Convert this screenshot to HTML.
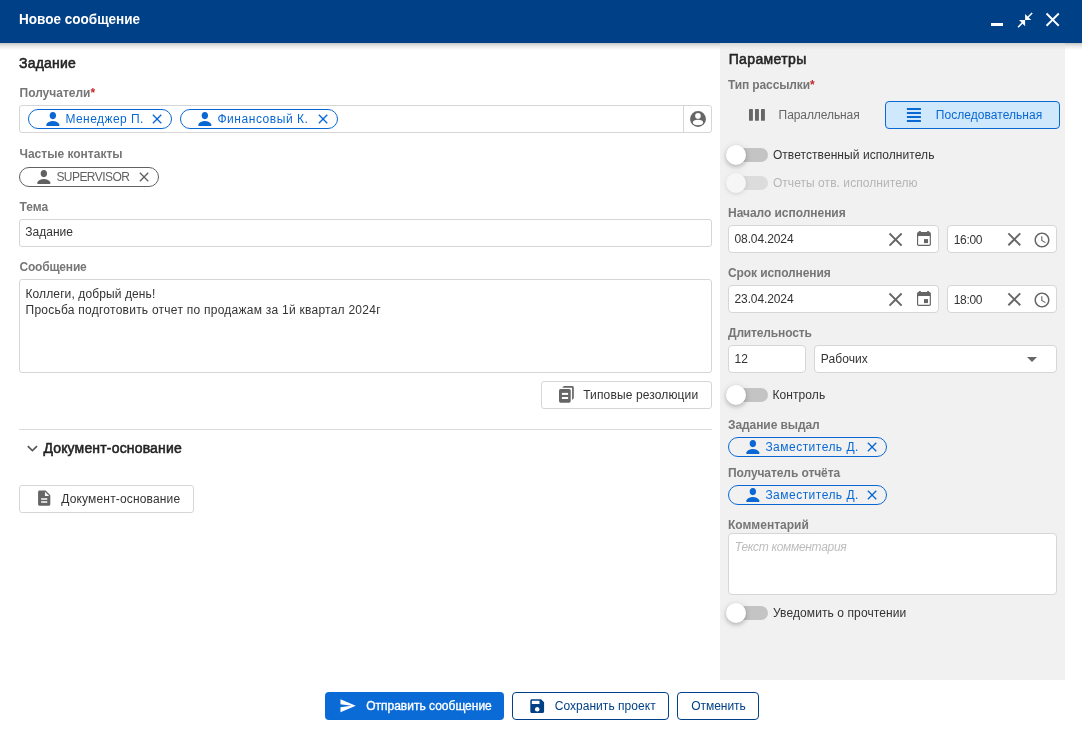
<!DOCTYPE html>
<html><head><meta charset="utf-8"><title>Новое сообщение</title>
<style>
html,body{margin:0;padding:0;}
body{width:1082px;height:731px;position:relative;overflow:hidden;background:#fff;font-family:"Liberation Sans", sans-serif;}
#w{position:absolute;left:0;top:0;width:1082px;height:731px;will-change:transform;background:#fff;}
.t{position:absolute;white-space:nowrap;}
.r{position:absolute;}
</style></head><body><div id="w">
<div class="r" style="left:0px;top:0px;width:1082px;height:43px;background:#004087;"></div>
<div class="r" style="left:0px;top:43px;width:1082px;height:7px;background:linear-gradient(rgba(0,0,0,0.12),rgba(0,0,0,0.05) 40%,rgba(0,0,0,0));"></div>
<div class="t" style="left:19px;top:10.40px;font-size:15px;line-height:18px;font-weight:bold;color:#fff;letter-spacing:0px;font-style:normal;transform:scaleX(0.902);transform-origin:0 0;">Новое сообщение</div>
<div class="r" style="left:991px;top:23.4px;width:12px;height:2.8px;background:#fff;"></div>
<svg class="r" style="left:1015.8px;top:11px" width="18.24" height="18.24" viewBox="0 0 24 24" fill="#fff"><path d="M22 3.41L16.71 8.7 20 12h-8V4l3.29 3.29L20.59 2 22 3.41zM3.41 22l5.29-5.29L12 20v-8H4l3.29 3.29L2 20.59 3.41 22z"/></svg>
<svg class="r" style="left:1041.45px;top:8.3px" width="23.3" height="23.3" viewBox="0 0 24 24" fill="#fff"><path d="M19 6.41L17.59 5 12 10.59 6.41 5 5 6.41 10.59 12 5 17.59 6.41 19 12 13.41 17.59 19 19 17.59 13.41 12z"/></svg>
<div class="r" style="left:720px;top:43px;width:345px;height:637px;background:#f1f1f1;"></div>
<div class="r" style="left:0px;top:43px;width:1082px;height:7px;background:linear-gradient(rgba(0,0,0,0.12),rgba(0,0,0,0.05) 40%,rgba(0,0,0,0));"></div>
<div class="t" style="left:19px;top:54.75px;font-size:14px;line-height:17px;font-weight:normal;color:#242424;letter-spacing:0.21px;font-style:normal;-webkit-text-stroke:0.55px #242424;">Задание</div>
<div class="t" style="left:19.5px;top:86.04px;font-size:12px;line-height:14px;font-weight:bold;color:#767676;letter-spacing:0px;font-style:normal;">Получатели<span style="color:#c62828">*</span></div>
<div class="r" style="left:19px;top:105px;width:693px;height:28px;box-sizing:border-box;border:1px solid #d6d6d6;border-radius:3px;background:#fff;"></div>
<div class="r" style="left:683px;top:105px;width:1px;height:28px;background:#d6d6d6;"></div>
<svg class="r" style="left:688px;top:109px" width="20" height="20" viewBox="688 109 20 20" fill="#666"><circle cx="698" cy="119" r="7.95"/><circle cx="697.95" cy="115.9" r="2.8" fill="#fff"/><ellipse cx="698" cy="122.5" rx="5.1" ry="2.75" fill="#fff"/></svg>
<div class="r" style="left:28px;top:109px;width:144px;height:20px;box-sizing:border-box;border:1px solid #0a68d4;border-radius:10px;"></div>
<svg class="r" style="left:45.9px;top:111.9px" width="13.7" height="14.2" viewBox="0 0 13.7 14.2" fill="#0a68d4"><ellipse cx="6.85" cy="3.6" rx="3.15" ry="3.6"/><path d="M0.3,12.6 C1.2,10.3 3.8,9.1 6.85,9.1 C9.9,9.1 12.5,10.3 13.4,12.6 C13.7,13.5 13.2,14.2 12.3,14.2 H1.4 C0.5,14.2 0,13.5 0.3,12.6Z"/></svg>
<div class="t" style="left:65.4px;top:111.84px;font-size:12px;line-height:14px;font-weight:normal;color:#0a68d4;letter-spacing:0.45px;font-style:normal;">Менеджер П.</div>
<svg class="r" style="left:149.34285714285716px;top:110.94285714285715px" width="16.114285714285714" height="16.114285714285714" viewBox="0 0 24 24" fill="#0a68d4"><path d="M19 6.41L17.59 5 12 10.59 6.41 5 5 6.41 10.59 12 5 17.59 6.41 19 12 13.41 17.59 19 19 17.59 13.41 12z"/></svg>
<div class="r" style="left:180px;top:109px;width:158px;height:20px;box-sizing:border-box;border:1px solid #0a68d4;border-radius:10px;"></div>
<svg class="r" style="left:197.9px;top:111.9px" width="13.7" height="14.2" viewBox="0 0 13.7 14.2" fill="#0a68d4"><ellipse cx="6.85" cy="3.6" rx="3.15" ry="3.6"/><path d="M0.3,12.6 C1.2,10.3 3.8,9.1 6.85,9.1 C9.9,9.1 12.5,10.3 13.4,12.6 C13.7,13.5 13.2,14.2 12.3,14.2 H1.4 C0.5,14.2 0,13.5 0.3,12.6Z"/></svg>
<div class="t" style="left:217.4px;top:111.84px;font-size:12px;line-height:14px;font-weight:normal;color:#0a68d4;letter-spacing:0.55px;font-style:normal;">Финансовый К.</div>
<svg class="r" style="left:315.3428571428571px;top:110.94285714285715px" width="16.114285714285714" height="16.114285714285714" viewBox="0 0 24 24" fill="#0a68d4"><path d="M19 6.41L17.59 5 12 10.59 6.41 5 5 6.41 10.59 12 5 17.59 6.41 19 12 13.41 17.59 19 19 17.59 13.41 12z"/></svg>
<div class="t" style="left:19.5px;top:146.84px;font-size:12px;line-height:14px;font-weight:bold;color:#767676;letter-spacing:0px;font-style:normal;">Частые контакты</div>
<div class="r" style="left:19px;top:167px;width:140px;height:20px;box-sizing:border-box;border:1px solid #616161;border-radius:10px;"></div>
<svg class="r" style="left:36.9px;top:169.9px" width="13.7" height="14.2" viewBox="0 0 13.7 14.2" fill="#616161"><ellipse cx="6.85" cy="3.6" rx="3.15" ry="3.6"/><path d="M0.3,12.6 C1.2,10.3 3.8,9.1 6.85,9.1 C9.9,9.1 12.5,10.3 13.4,12.6 C13.7,13.5 13.2,14.2 12.3,14.2 H1.4 C0.5,14.2 0,13.5 0.3,12.6Z"/></svg>
<div class="t" style="left:56.4px;top:169.84px;font-size:12px;line-height:14px;font-weight:normal;color:#616161;letter-spacing:-0.55px;font-style:normal;">SUPERVISOR</div>
<svg class="r" style="left:136.34285714285716px;top:168.94285714285715px" width="16.114285714285714" height="16.114285714285714" viewBox="0 0 24 24" fill="#616161"><path d="M19 6.41L17.59 5 12 10.59 6.41 5 5 6.41 10.59 12 5 17.59 6.41 19 12 13.41 17.59 19 19 17.59 13.41 12z"/></svg>
<div class="t" style="left:19.5px;top:200.04px;font-size:12px;line-height:14px;font-weight:bold;color:#767676;letter-spacing:0px;font-style:normal;">Тема</div>
<div class="r" style="left:19px;top:219px;width:693px;height:28px;box-sizing:border-box;border:1px solid #d6d6d6;border-radius:3px;background:#fff;"></div>
<div class="t" style="left:25.3px;top:225.44px;font-size:12px;line-height:14px;font-weight:normal;color:#333333;letter-spacing:0px;font-style:normal;">Задание</div>
<div class="t" style="left:19.5px;top:260.04px;font-size:12px;line-height:14px;font-weight:bold;color:#767676;letter-spacing:-0.2px;font-style:normal;">Сообщение</div>
<div class="r" style="left:19px;top:279px;width:693px;height:94px;box-sizing:border-box;border:1px solid #d6d6d6;border-radius:3px;background:#fff;"></div>
<div class="t" style="left:25.5px;top:286.84px;font-size:12px;line-height:14px;font-weight:normal;color:#333333;letter-spacing:0.11px;font-style:normal;">Коллеги, добрый день!</div>
<div class="t" style="left:25.5px;top:302.94px;font-size:12px;line-height:14px;font-weight:normal;color:#333333;letter-spacing:0.25px;font-style:normal;">Просьба подготовить отчет по продажам за 1й квартал 2024г</div>
<div class="r" style="left:541px;top:381px;width:171px;height:28px;box-sizing:border-box;border:1px solid #d6d6d6;border-radius:3px;background:#fff;"></div>
<svg class="r" style="left:550px;top:382px" width="40" height="26" viewBox="550 382 40 26" fill="#666"><path d="M562.2 387.7 L563.9 386 H572.3 A1.5 1.5 0 0 1 573.8 387.5 V398.3 L572.1 400 V387.7 Z"/><rect x="559" y="389" width="11.7" height="13.7" rx="1.6"/><rect x="561.9" y="392.9" width="6.2" height="2" fill="#fff"/><rect x="561.9" y="397" width="6.2" height="2" fill="#fff"/></svg>
<div class="t" style="left:583.2px;top:387.84px;font-size:12px;line-height:14px;font-weight:normal;color:#333333;letter-spacing:0.13px;font-style:normal;">Типовые резолюции</div>
<div class="r" style="left:19px;top:429px;width:693px;height:1px;background:#dcdcdc;"></div>
<svg class="r" style="left:21.5px;top:438.3px" width="20.8" height="20.8" viewBox="0 0 24 24" fill="#555"><path d="M16.59 8.59L12 13.17 7.41 8.59 6 10l6 6 6-6z"/></svg>
<div class="t" style="left:43.4px;top:439.65px;font-size:14px;line-height:17px;font-weight:normal;color:#242424;letter-spacing:0.17px;font-style:normal;-webkit-text-stroke:0.55px #242424;">Документ-основание</div>
<div class="r" style="left:19px;top:485px;width:175px;height:28px;box-sizing:border-box;border:1px solid #d6d6d6;border-radius:3px;background:#fff;"></div>
<svg class="r" style="left:35.2px;top:489.3px" width="18.4" height="18.4" viewBox="0 0 24 24" fill="#666"><path d="M14 2H6c-1.1 0-1.99.9-1.99 2L4 20c0 1.1.89 2 2 2h12c1.1 0 2-.9 2-2V8l-6-6zm2 16H8v-2h8v2zm0-4H8v-2h8v2zm-3-5V3.5L18.5 9H13z"/></svg>
<div class="t" style="left:61.3px;top:491.64px;font-size:12px;line-height:14px;font-weight:normal;color:#333333;letter-spacing:0.16px;font-style:normal;">Документ-основание</div>
<div class="t" style="left:728.7px;top:51.15px;font-size:14px;line-height:17px;font-weight:normal;color:#242424;letter-spacing:0.37px;font-style:normal;-webkit-text-stroke:0.55px #242424;">Параметры</div>
<div class="t" style="left:728.0px;top:78.04px;font-size:12px;line-height:14px;font-weight:bold;color:#767676;letter-spacing:-0.12px;font-style:normal;">Тип рассылки<span style="color:#c62828">*</span></div>
<svg class="r" style="left:745px;top:105px" width="24" height="20" viewBox="745 105 24 20" fill="#666"><rect x="749" y="109" width="3.9" height="11.8" rx="0.6"/><rect x="755" y="109" width="3.9" height="11.8" rx="0.6"/><rect x="761" y="109" width="3.9" height="11.8" rx="0.6"/></svg>
<div class="t" style="left:778.6px;top:107.64px;font-size:12px;line-height:14px;font-weight:normal;color:#666;letter-spacing:-0.08px;font-style:normal;">Параллельная</div>
<div class="r" style="left:885px;top:101px;width:175px;height:28px;box-sizing:border-box;border:1px solid #0a68d4;border-radius:4px;background:#cfe8fc;"></div>
<svg class="r" style="left:903px;top:104px" width="22" height="22" viewBox="903 104 22 22" fill="#0a68d4"><rect x="906.9" y="108" width="14.1" height="1.9" rx="0.5"/><rect x="906.9" y="112" width="14.1" height="1.9" rx="0.5"/><rect x="906.9" y="116" width="14.1" height="1.9" rx="0.5"/><rect x="906.9" y="120" width="14.1" height="1.9" rx="0.5"/></svg>
<div class="t" style="left:935.8px;top:107.84px;font-size:12px;line-height:14px;font-weight:normal;color:#0a68d4;letter-spacing:0.05px;font-style:normal;">Последовательная</div>
<div class="r" style="left:736px;top:148px;width:32px;height:14px;background:#c4c4c4;border-radius:7px;"></div>
<div class="r" style="left:726px;top:145px;width:20px;height:20px;background:#fff;border-radius:50%;box-shadow:0 2px 4px rgba(0,0,0,0.2),0 1px 8px rgba(0,0,0,0.1);"></div>
<div class="t" style="left:772.9px;top:147.84px;font-size:12px;line-height:14px;font-weight:normal;color:#333333;letter-spacing:0.07px;font-style:normal;">Ответственный исполнитель</div>
<div class="r" style="left:736px;top:176px;width:32px;height:14px;background:#dcdcdc;border-radius:7px;"></div>
<div class="r" style="left:726px;top:173px;width:20px;height:20px;background:#f6f6f6;border-radius:50%;box-shadow:0 2px 4px rgba(0,0,0,0.07),0 0 6px rgba(0,0,0,0.05);"></div>
<div class="t" style="left:772.9px;top:175.84px;font-size:12px;line-height:14px;font-weight:normal;color:#b5b5b5;letter-spacing:0.06px;font-style:normal;">Отчеты отв. исполнителю</div>
<div class="t" style="left:728.0px;top:205.94px;font-size:12px;line-height:14px;font-weight:bold;color:#767676;letter-spacing:-0.04px;font-style:normal;">Начало исполнения</div>
<div class="r" style="left:728px;top:225px;width:211px;height:28px;box-sizing:border-box;border:1px solid #d6d6d6;border-radius:4px;background:#fff;"></div>
<div class="t" style="left:734.5px;top:231.84px;font-size:12px;line-height:14px;font-weight:normal;color:#333333;letter-spacing:-0.11px;font-style:normal;">08.04.2024</div>
<svg class="r" style="left:884.4285714285714px;top:227.6285714285714px" width="23.142857142857142" height="23.142857142857142" viewBox="0 0 24 24" fill="#666"><path d="M19 6.41L17.59 5 12 10.59 6.41 5 5 6.41 10.59 12 5 17.59 6.41 19 12 13.41 17.59 19 19 17.59 13.41 12z"/></svg>
<svg class="r" style="left:917px;top:230.9px" width="14" height="15" viewBox="0 0 14 15" fill="#666"><rect x="1.8" y="0" width="2.1" height="2.5" rx="0.6"/><rect x="10" y="0" width="2.1" height="2.5" rx="0.6"/><rect x="0" y="0.9" width="13.9" height="14" rx="1.7"/><rect x="1.15" y="5" width="11.6" height="8.75" rx="0.4" fill="#fff"/><rect x="7" y="8.1" width="4" height="4"/></svg>
<div class="r" style="left:947px;top:225px;width:110px;height:28px;box-sizing:border-box;border:1px solid #d6d6d6;border-radius:4px;background:#fff;"></div>
<div class="t" style="left:953.7px;top:232.84px;font-size:12px;line-height:14px;font-weight:normal;color:#333333;letter-spacing:-0.31px;font-style:normal;">16:00</div>
<svg class="r" style="left:1002.6857142857143px;top:228.18571428571428px" width="22.628571428571426" height="22.628571428571426" viewBox="0 0 24 24" fill="#666"><path d="M19 6.41L17.59 5 12 10.59 6.41 5 5 6.41 10.59 12 5 17.59 6.41 19 12 13.41 17.59 19 19 17.59 13.41 12z"/></svg>
<svg class="r" style="left:1032.9px;top:230.8px" width="18" height="18" viewBox="0 0 24 24" fill="#666"><path d="M11.99 2C6.47 2 2 6.48 2 12s4.47 10 9.99 10C17.52 22 22 17.52 22 12S17.52 2 11.99 2zM12 20c-4.42 0-8-3.58-8-8s3.58-8 8-8 8 3.58 8 8-3.58 8-8 8zm.5-13H11v6l5.25 3.15.75-1.23-4.5-2.67z"/></svg>
<div class="t" style="left:728.0px;top:265.94px;font-size:12px;line-height:14px;font-weight:bold;color:#767676;letter-spacing:-0.1px;font-style:normal;">Срок исполнения</div>
<div class="r" style="left:728px;top:285px;width:211px;height:28px;box-sizing:border-box;border:1px solid #d6d6d6;border-radius:4px;background:#fff;"></div>
<div class="t" style="left:734.5px;top:291.84px;font-size:12px;line-height:14px;font-weight:normal;color:#333333;letter-spacing:-0.11px;font-style:normal;">23.04.2024</div>
<svg class="r" style="left:884.4285714285714px;top:287.62857142857143px" width="23.142857142857142" height="23.142857142857142" viewBox="0 0 24 24" fill="#666"><path d="M19 6.41L17.59 5 12 10.59 6.41 5 5 6.41 10.59 12 5 17.59 6.41 19 12 13.41 17.59 19 19 17.59 13.41 12z"/></svg>
<svg class="r" style="left:917px;top:290.9px" width="14" height="15" viewBox="0 0 14 15" fill="#666"><rect x="1.8" y="0" width="2.1" height="2.5" rx="0.6"/><rect x="10" y="0" width="2.1" height="2.5" rx="0.6"/><rect x="0" y="0.9" width="13.9" height="14" rx="1.7"/><rect x="1.15" y="5" width="11.6" height="8.75" rx="0.4" fill="#fff"/><rect x="7" y="8.1" width="4" height="4"/></svg>
<div class="r" style="left:947px;top:285px;width:110px;height:28px;box-sizing:border-box;border:1px solid #d6d6d6;border-radius:4px;background:#fff;"></div>
<div class="t" style="left:953.7px;top:292.84px;font-size:12px;line-height:14px;font-weight:normal;color:#333333;letter-spacing:-0.31px;font-style:normal;">18:00</div>
<svg class="r" style="left:1002.6857142857143px;top:288.1857142857143px" width="22.628571428571426" height="22.628571428571426" viewBox="0 0 24 24" fill="#666"><path d="M19 6.41L17.59 5 12 10.59 6.41 5 5 6.41 10.59 12 5 17.59 6.41 19 12 13.41 17.59 19 19 17.59 13.41 12z"/></svg>
<svg class="r" style="left:1032.9px;top:290.8px" width="18" height="18" viewBox="0 0 24 24" fill="#666"><path d="M11.99 2C6.47 2 2 6.48 2 12s4.47 10 9.99 10C17.52 22 22 17.52 22 12S17.52 2 11.99 2zM12 20c-4.42 0-8-3.58-8-8s3.58-8 8-8 8 3.58 8 8-3.58 8-8 8zm.5-13H11v6l5.25 3.15.75-1.23-4.5-2.67z"/></svg>
<div class="t" style="left:728.0px;top:326.34px;font-size:12px;line-height:14px;font-weight:bold;color:#767676;letter-spacing:-0.15px;font-style:normal;">Длительность</div>
<div class="r" style="left:728px;top:345px;width:78px;height:28px;box-sizing:border-box;border:1px solid #d6d6d6;border-radius:4px;background:#fff;"></div>
<div class="t" style="left:734.5px;top:351.84px;font-size:12px;line-height:14px;font-weight:normal;color:#333333;letter-spacing:0px;font-style:normal;">12</div>
<div class="r" style="left:814px;top:345px;width:243px;height:28px;box-sizing:border-box;border:1px solid #d6d6d6;border-radius:4px;background:#fff;"></div>
<div class="t" style="left:820.8px;top:351.84px;font-size:12px;line-height:14px;font-weight:normal;color:#333333;letter-spacing:0.07px;font-style:normal;">Рабочих</div>
<svg class="r" style="left:1020px;top:347px" width="24" height="24" viewBox="0 0 24 24" fill="#666"><path d="M7 10l5 5 5-5z"/></svg>
<div class="r" style="left:736px;top:388px;width:32px;height:14px;background:#c4c4c4;border-radius:7px;"></div>
<div class="r" style="left:726px;top:385px;width:20px;height:20px;background:#fff;border-radius:50%;box-shadow:0 2px 4px rgba(0,0,0,0.2),0 1px 8px rgba(0,0,0,0.1);"></div>
<div class="t" style="left:772.5px;top:387.84px;font-size:12px;line-height:14px;font-weight:normal;color:#333333;letter-spacing:0.08px;font-style:normal;">Контроль</div>
<div class="t" style="left:728px;top:418.14px;font-size:12px;line-height:14px;font-weight:bold;color:#767676;letter-spacing:-0.08px;font-style:normal;">Задание выдал</div>
<div class="r" style="left:728px;top:437px;width:159px;height:20px;box-sizing:border-box;border:1px solid #0a68d4;border-radius:10px;"></div>
<svg class="r" style="left:745.9px;top:439.9px" width="13.7" height="14.2" viewBox="0 0 13.7 14.2" fill="#0a68d4"><ellipse cx="6.85" cy="3.6" rx="3.15" ry="3.6"/><path d="M0.3,12.6 C1.2,10.3 3.8,9.1 6.85,9.1 C9.9,9.1 12.5,10.3 13.4,12.6 C13.7,13.5 13.2,14.2 12.3,14.2 H1.4 C0.5,14.2 0,13.5 0.3,12.6Z"/></svg>
<div class="t" style="left:765.4px;top:439.84px;font-size:12px;line-height:14px;font-weight:normal;color:#0a68d4;letter-spacing:0.48px;font-style:normal;">Заместитель Д.</div>
<svg class="r" style="left:864.3428571428572px;top:438.9428571428571px" width="16.114285714285714" height="16.114285714285714" viewBox="0 0 24 24" fill="#0a68d4"><path d="M19 6.41L17.59 5 12 10.59 6.41 5 5 6.41 10.59 12 5 17.59 6.41 19 12 13.41 17.59 19 19 17.59 13.41 12z"/></svg>
<div class="t" style="left:728px;top:465.84px;font-size:12px;line-height:14px;font-weight:bold;color:#767676;letter-spacing:-0.08px;font-style:normal;">Получатель отчёта</div>
<div class="r" style="left:728px;top:485px;width:159px;height:20px;box-sizing:border-box;border:1px solid #0a68d4;border-radius:10px;"></div>
<svg class="r" style="left:745.9px;top:487.9px" width="13.7" height="14.2" viewBox="0 0 13.7 14.2" fill="#0a68d4"><ellipse cx="6.85" cy="3.6" rx="3.15" ry="3.6"/><path d="M0.3,12.6 C1.2,10.3 3.8,9.1 6.85,9.1 C9.9,9.1 12.5,10.3 13.4,12.6 C13.7,13.5 13.2,14.2 12.3,14.2 H1.4 C0.5,14.2 0,13.5 0.3,12.6Z"/></svg>
<div class="t" style="left:765.4px;top:487.84px;font-size:12px;line-height:14px;font-weight:normal;color:#0a68d4;letter-spacing:0.48px;font-style:normal;">Заместитель Д.</div>
<svg class="r" style="left:864.3428571428572px;top:486.9428571428571px" width="16.114285714285714" height="16.114285714285714" viewBox="0 0 24 24" fill="#0a68d4"><path d="M19 6.41L17.59 5 12 10.59 6.41 5 5 6.41 10.59 12 5 17.59 6.41 19 12 13.41 17.59 19 19 17.59 13.41 12z"/></svg>
<div class="t" style="left:728.0px;top:517.94px;font-size:12px;line-height:14px;font-weight:bold;color:#767676;letter-spacing:0px;font-style:normal;">Комментарий</div>
<div class="r" style="left:728px;top:533px;width:329px;height:62px;box-sizing:border-box;border:1px solid #d6d6d6;border-radius:4px;background:#fff;"></div>
<div class="t" style="left:734.8px;top:540.44px;font-size:12px;line-height:14px;font-weight:normal;color:#bdbdbd;letter-spacing:-0.31px;font-style:italic;">Текст комментария</div>
<div class="r" style="left:736px;top:606px;width:32px;height:14px;background:#c4c4c4;border-radius:7px;"></div>
<div class="r" style="left:726px;top:603px;width:20px;height:20px;background:#fff;border-radius:50%;box-shadow:0 2px 4px rgba(0,0,0,0.2),0 1px 8px rgba(0,0,0,0.1);"></div>
<div class="t" style="left:773px;top:605.84px;font-size:12px;line-height:14px;font-weight:normal;color:#333333;letter-spacing:0.1px;font-style:normal;">Уведомить о прочтении</div>
<div class="r" style="left:325px;top:692px;width:179px;height:28px;background:#0a6ad6;border-radius:4px;"></div>
<svg class="r" style="left:339.44px;top:697.2px" width="17.5" height="17.5" viewBox="0 0 24 24" fill="#fff"><path d="M2.01 21L23 12 2.01 3 2 10l15 2-15 2z"/></svg>
<div class="t" style="left:366.2px;top:698.84px;font-size:12px;line-height:14px;font-weight:normal;color:#fff;letter-spacing:0px;font-style:normal;-webkit-text-stroke:0.35px #fff;">Отправить сообщение</div>
<div class="r" style="left:512px;top:692px;width:157px;height:28px;box-sizing:border-box;border:1px solid #004087;border-radius:4px;background:#fff;"></div>
<svg class="r" style="left:527.85px;top:696.8px" width="18.4" height="18.4" viewBox="0 0 24 24" fill="#004087"><path d="M17 3H5c-1.11 0-2 .9-2 2v14c0 1.1.89 2 2 2h14c1.1 0 2-.9 2-2V7l-4-4zm-5 16c-1.66 0-3-1.34-3-3s1.34-3 3-3 3 1.34 3 3-1.34 3-3 3zm3-10H5V5h10v4z"/></svg>
<div class="t" style="left:554.7px;top:699.34px;font-size:12px;line-height:14px;font-weight:normal;color:#004087;letter-spacing:0.04px;font-style:normal;">Сохранить проект</div>
<div class="r" style="left:677px;top:692px;width:82px;height:28px;box-sizing:border-box;border:1px solid #004087;border-radius:4px;background:#fff;"></div>
<div class="t" style="left:691.2px;top:699.34px;font-size:12px;line-height:14px;font-weight:normal;color:#004087;letter-spacing:-0.03px;font-style:normal;">Отменить</div>
</div></body></html>
